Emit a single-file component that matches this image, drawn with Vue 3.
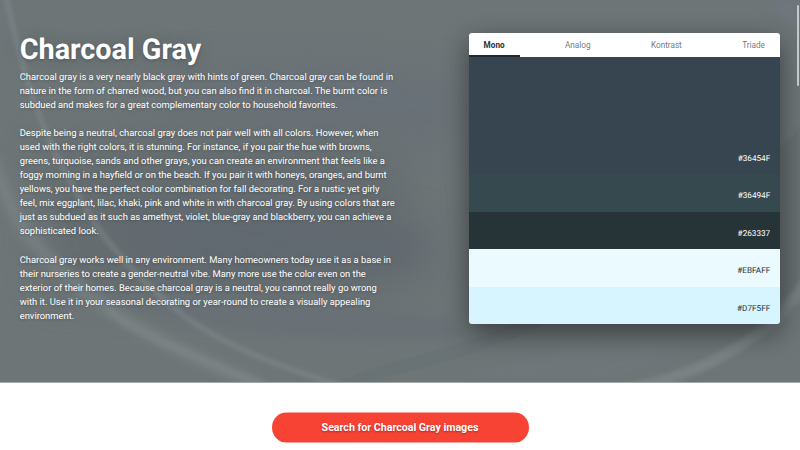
<script setup>
import { ref } from 'vue'

const tabs = ['Mono', 'Analog', 'Kontrast', 'Triade']
const active = ref('Mono')

const swatches = [
  { hex: '#36454F', dark: true },
  { hex: '#36494F', dark: true },
  { hex: '#263337', dark: true },
  { hex: '#EBFAFF', dark: false },
  { hex: '#D7F5FF', dark: false },
]

const paragraphs = [
  [
    'Charcoal gray is a very nearly black gray with hints of green. Charcoal gray can be found in',
    'nature in the form of charred wood, but you can also find it in charcoal. The burnt color is',
    'subdued and makes for a great complementary color to household favorites.',
  ],
  [
    'Despite being a neutral, charcoal gray does not pair well with all colors. However, when',
    'used with the right colors, it is stunning. For instance, if you pair the hue with browns,',
    'greens, turquoise, sands and other grays, you can create an environment that feels like a',
    'foggy morning in a hayfield or on the beach. If you pair it with honeys, oranges, and burnt',
    'yellows, you have the perfect color combination for fall decorating. For a rustic yet girly',
    'feel, mix eggplant, lilac, khaki, pink and white in with charcoal gray. By using colors that are',
    'just as subdued as it such as amethyst, violet, blue-gray and blackberry, you can achieve a',
    'sophisticated look.',
  ],
  [
    'Charcoal gray works well in any environment. Many homeowners today use it as a base in',
    'their nurseries to create a gender-neutral vibe. Many more use the color even on the',
    'exterior of their homes. Because charcoal gray is a neutral, you cannot really go wrong',
    'with it. Use it in your seasonal decorating or year-round to create a visually appealing',
    'environment.',
  ],
]
</script>

<template>
  <main class="page">
    <section class="hero">
      <svg class="backdrop" viewBox="0 0 800 382" preserveAspectRatio="none" aria-hidden="true">
        <defs>
          <filter id="soft" color-interpolation-filters="sRGB" x="-20%" y="-20%" width="140%" height="140%"><feGaussianBlur stdDeviation="2" /></filter>
          <filter id="wide" color-interpolation-filters="sRGB" x="-30%" y="-30%" width="160%" height="160%"><feGaussianBlur stdDeviation="4" /></filter>
          <filter id="haze" color-interpolation-filters="sRGB" x="-50%" y="-50%" width="200%" height="200%"><feGaussianBlur stdDeviation="18" /></filter>
        </defs>
        <rect width="800" height="383" fill="#6d7577" />
        <path d="M180 75 Q300 50 460 85 L455 140 Q330 125 150 110Z" fill="#697178" filter="url(#haze)" />
        <path d="M40 150 Q260 120 400 150 L410 270 Q260 310 50 290Z" fill="#656d70" filter="url(#haze)" />
        <path d="M100 220 Q300 195 440 235 L410 275 Q260 285 150 265Z" fill="#616970" filter="url(#haze)" />
        <path d="M100 292 Q300 295 455 320 L470 338 Q230 345 110 300Z" fill="#697176" filter="url(#wide)" />
        <path d="M0 0 L10 0 Q0 40 0 60Z M765 0 H800 V34Z" fill="#6f767e" filter="url(#wide)" />
        <path d="M390 363 Q480 340 530 317 L560 317 Q490 355 365 382 L335 382Z" fill="#687075" opacity=".7" />
        <path d="M450 383 Q560 340 690 346 L600 383Z" fill="#70787d" opacity=".55" filter="url(#wide)" />
        <path d="M800 124 Q793 140 780 147 V320 L800 290Z" fill="#60686b" opacity=".5" filter="url(#soft)" />
        <g fill="none" stroke="#858e90" stroke-linecap="round">
          <path d="M-8 160 C5 195 15 218 33 240 C57 270 84 293 120 317 C155 340 200 360 260 386" stroke-width="14" opacity=".4" filter="url(#wide)" />
          <path d="M110 312 C155 343 200 358 265 386" stroke-width="7" opacity=".3" filter="url(#soft)" />
          <path d="M6 -5 C15 40 30 100 55 152 C70 182 86 211 103 235 C124 262 154 292 183 315 C220 343 270 364 345 387" stroke-width="5" opacity=".5" filter="url(#soft)" />
          <path d="M633 388 C667 380 697 370 717 359 C755 338 778 322 808 280" stroke-width="11" opacity=".5" filter="url(#soft)" />
        </g>
      </svg>

      <article class="copy">
        <h1>Charcoal Gray</h1>
        <p v-for="(lines, i) in paragraphs" :key="i">
          <span v-for="line in lines" :key="line">{{ line }}</span>
        </p>
      </article>

      <aside class="palette">
        <nav class="tabs">
          <button
            v-for="tab in tabs"
            :key="tab"
            type="button"
            :class="{ active: tab === active }"
            @click="active = tab"
          >{{ tab }}</button>
        </nav>
        <ul>
          <li v-for="s in swatches" :key="s.hex" :class="{ dark: s.dark }" :style="{ backgroundColor: s.hex }">
            <span>{{ s.hex }}</span>
          </li>
        </ul>
      </aside>
      <i class="thumb"></i>
    </section>

    <section class="search">
      <button type="button">Search for Charcoal Gray images</button>
    </section>
  </main>
</template>

<style>
body { margin: 0; overflow: hidden; }
</style>

<style scoped>
.page {
  width: 800px;
  height: 450px;
  overflow: hidden;
  background: #fff;
  font-family: Roboto, sans-serif;
  text-rendering: geometricPrecision;
}
button { font: inherit; border: 0; margin: 0; cursor: pointer; }
.hero {
  position: relative;
  box-sizing: border-box;
  height: 383px;
  padding: 33px 20px 0 19.7px;
  border-bottom: 1px solid #a3a8a9;
  display: flex;
  justify-content: space-between;
  align-items: flex-start;
  overflow: hidden;
}
.backdrop { position: absolute; inset: 0; width: 100%; height: 100%; }
.copy {
  position: relative;
  width: 400px;
  color: #fff;
  font-size: 9.38px;
  line-height: 14.04px;
  text-shadow: 0 1px 3px rgba(0, 0, 0, .22), 0 0 18px rgba(0, 0, 0, .18);
}
h1 {
  margin: 0 0 3.95px;
  font-size: 28.8px;
  line-height: 34px;
  font-weight: 700;
}
p { margin: 0 0 14.04px; }
p span { display: block; white-space: nowrap; }
.palette {
  position: relative;
  width: 311.4px;
  border-radius: 3px;
  box-shadow: 0 9px 27px rgba(0, 0, 0, .48);
}
.tabs {
  display: flex;
  justify-content: space-between;
  height: 24.3px;
  background: #fff;
  border-radius: 3px 3px 0 0;
}
.tabs button {
  box-sizing: border-box;
  padding: 0 15px;
  background: none;
  color: #737b7f;
  font-size: 8.19px;
  line-height: 24px;
}
.tabs .active {
  color: #263337;
  font-weight: 700;
  box-shadow: inset 0 -2px #202b31;
}
ul { list-style: none; margin: 0; padding: 0; }
li {
  box-sizing: border-box;
  display: flex;
  align-items: flex-end;
  justify-content: flex-end;
  height: 37.44px;
  padding: 0 9.8px 10.5px;
  color: #263337;
  font-size: 8.19px;
  line-height: 12px;
}
li:first-child { height: 117px; }
li:last-child { border-radius: 0 0 3px 3px; }
li.dark { color: #fff; }
.thumb {
  position: absolute;
  top: 5px;
  right: 1px;
  width: 2px;
  height: 80.5px;
  border-radius: 1px;
  background: #c5c8c8;
}
.search { display: flex; justify-content: center; padding-top: 29px; }
.search button {
  width: 257px;
  height: 31px;
  padding: 0;
  border-radius: 16px;
  background: linear-gradient(#fba199 1px, #f74334 1px calc(100% - 1px), #fba199 calc(100% - 1px));
  color: #fff;
  font-size: 10.63px;
  font-weight: 700;
  line-height: 31px;
  text-shadow: 0 1px 2px rgba(0, 0, 0, .35);
}
</style>
